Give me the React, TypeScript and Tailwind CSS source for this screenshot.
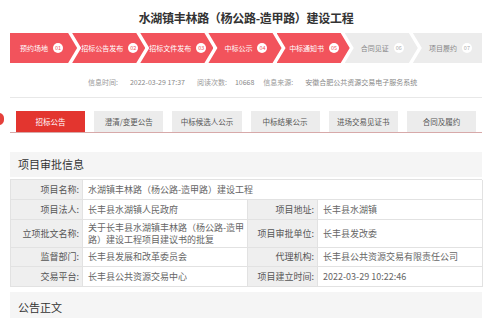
const steps = [
  { label: '预约场地', num: '01', done: true },
  { label: '招标公告发布', num: '02', done: true },
  { label: '招标文件发布', num: '03', done: true },
  { label: '中标公示', num: '04', done: true },
  { label: '中标通知书', num: '05', done: true },
  { label: '合同见证', num: '06', done: false },
  { label: '项目履约', num: '07', done: false },
]

const tabs = ['招标公告', '澄清/变更公告', '中标候选人公示', '中标结果公示', '进场交易见证书', '合同及履约']

function Label({ children }: { children: React.ReactNode }) {
  return (
    <div className="flex items-center justify-end bg-[#efefef] border-b border-r border-[#e2e2e2] pr-[3px] text-[#555]">
      {children}
    </div>
  )
}

function Value({ children, wide }: { children: React.ReactNode; wide?: boolean }) {
  return (
    <div
      className={`flex items-center border-b border-r border-[#e2e2e2] bg-white pl-[5px] text-[#666] ${
        wide ? 'col-span-3' : ''
      }`}
    >
      {children}
    </div>
  )
}

export default function App() {
  return (
    <div
      className="relative w-[500px] h-[318px] overflow-hidden bg-white"
      style={{ fontFamily: '"Noto Sans CJK SC", "Noto Sans", sans-serif' }}
    >
      {/* floating side widget, cut off at the left edge */}
      <div className="absolute left-[-6px] top-[113px] w-[10px] h-[12px] rounded-full bg-[#e5403b]" />

      <div className="ml-[10px] w-[472px]">
        <div className="h-[33px] flex items-center justify-center pt-[2px]">
          <h1 className="text-[12px] font-bold text-[#333] tracking-[-0.3px]">水湖镇丰林路（杨公路-造甲路）建设工程</h1>
        </div>

        {/* progress steps */}
        <div className="flex h-[30px]">
          {steps.map((s, i) => {
            const first = i === 0
            const last = i === steps.length - 1
            const clip = first
              ? '[clip-path:polygon(0_0,calc(100%-9px)_0,100%_50%,calc(100%-9px)_100%,0_100%)]'
              : last
              ? '[clip-path:polygon(0_0,100%_0,100%_100%,0_100%,9px_50%)]'
              : '[clip-path:polygon(0_0,calc(100%-9px)_0,100%_50%,calc(100%-9px)_100%,0_100%,9px_50%)]'
            return (
              <div
                key={s.num}
                className={`flex-1 flex items-center justify-center gap-[5px] text-[7px] ${
                  first ? '' : '-ml-[5px] pl-[6px]'
                } ${last ? '' : 'pr-[4px]'} ${clip} ${
                  s.done ? 'bg-[#f2535c] text-white' : 'bg-[#ececec] text-[#888]'
                }`}
              >
                <span className="whitespace-nowrap">{s.label}</span>
                <span
                  className={`w-[10px] h-[10px] rounded-full bg-white flex items-center justify-center text-[5.5px] ${
                    s.done ? 'text-[#f2535c]' : 'text-[#aaa]'
                  }`}
                >
                  {s.num}
                </span>
              </div>
            )
          })}
        </div>

        {/* meta info */}
        <div className="h-[35px] pt-[4px] flex items-center text-[7px] text-[#999] border-b border-[#e8e8e8]">
          <span className="ml-[78px]">信息时间:</span>
          <span className="ml-[12px] text-[#888]">2022-03-29 17:37</span>
          <span className="ml-[12px]">阅读次数:</span>
          <span className="ml-[8px] text-[#888]">10668</span>
          <span className="ml-[9px]">信息来源:</span>
          <span className="ml-[12px] text-[#888]">安徽合肥公共资源交易电子服务系统</span>
        </div>

        {/* tabs */}
        <div className="mt-[13px] flex gap-[9px] px-[6px] border-b border-[#d7a9a9]">
          {tabs.map((t, i) => (
            <div
              key={t}
              className={`w-[70px] h-[21px] flex items-center justify-center text-[7.5px] ${
                i === 0 ? 'bg-[#e3352f] text-white' : 'bg-[#ececec] text-[#555]'
              }`}
            >
              {t}
            </div>
          ))}
        </div>

        <div className="mt-[19px] h-[25px] bg-[#f5f5f5] flex items-center pl-[8px] text-[11px] text-[#333]">
          项目审批信息
        </div>

        {/* approval table */}
        <div className="mt-[2px] grid grid-cols-[72px_165px_70px_165px] grid-rows-[20px_20px_28px_19px_20px] text-[9px] border-t border-l border-[#e2e2e2]">
          <Label>项目名称:</Label>
          <Value wide>水湖镇丰林路（杨公路-造甲路）建设工程</Value>
          <Label>项目法人:</Label>
          <Value>长丰县水湖镇人民政府</Value>
          <Label>项目地址:</Label>
          <Value>长丰县水湖镇</Value>
          <Label>立项批文名称:</Label>
          <Value>
            <div className="flex flex-col leading-[12px]">
              <span>关于长丰县水湖镇丰林路（杨公路-造甲</span>
              <span>路）建设工程项目建议书的批复</span>
            </div>
          </Value>
          <Label>项目审批单位:</Label>
          <Value>长丰县发改委</Value>
          <Label>监督部门:</Label>
          <Value>长丰县发展和改革委员会</Value>
          <Label>代理机构:</Label>
          <Value>长丰县公共资源交易有限责任公司</Value>
          <Label>交易平台:</Label>
          <Value>长丰县公共资源交易中心</Value>
          <Label>项目建立时间:</Label>
          <Value>2022-03-29 10:22:46</Value>
        </div>

        <div className="mt-[5px] h-[30px] bg-[#f5f5f5] flex items-center pl-[8px] text-[11px] text-[#333]">
          公告正文
        </div>
      </div>
    </div>
  )
}
